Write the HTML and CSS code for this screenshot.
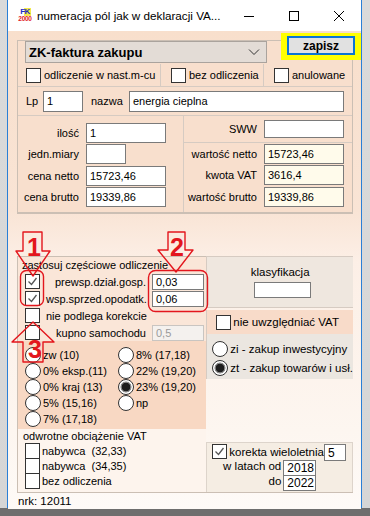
FILE: index.html
```html
<!DOCTYPE html>
<html lang="pl">
<head>
<meta charset="utf-8">
<title>numeracja pól</title>
<link rel="stylesheet" href="styles.css">
</head>
<body>
<div class="desk">
  <div class="win">
    <div class="titlebar">
      <div class="appicon"><span class="ic-fk">FK</span><span class="ic-yr">2000</span></div>
      <div class="title">numeracja pól jak w deklaracji VA...</div>
      <div class="caption">
        <span class="capbtn"><svg width="12" height="12" viewBox="0 0 12 12"><line x1="1" y1="6.5" x2="11" y2="6.5" stroke="#000" stroke-width="1"/></svg></span>
        <span class="capbtn"><svg width="12" height="12" viewBox="0 0 12 12"><rect x="1.5" y="1.5" width="9" height="9" fill="none" stroke="#000" stroke-width="1"/></svg></span>
        <span class="capbtn"><svg width="12" height="12" viewBox="0 0 12 12"><path d="M1 1 L11 11 M11 1 L1 11" stroke="#000" stroke-width="1"/></svg></span>
      </div>
    </div>
    <div class="client">
      <div class="save-wrap"><div class="save">zapisz</div></div>
      <div class="panel">
        <div class="row-combo">
          <div class="combo"><span>ZK-faktura zakupu</span><svg width="12" height="8" viewBox="0 0 12 8"><polyline points="1,1.5 6,6.5 11,1.5" fill="none" stroke="#333" stroke-width="1"/></svg></div>
        </div>
        <div class="row-flags">
          <div class="flag f1"><span class="chk"></span><span>odliczenie w nast.m-cu</span></div>
          <div class="flag f2"><span class="chk"></span><span>bez odliczenia</span></div>
          <div class="flag f3"><span class="chk"></span><span>anulowane</span></div>
        </div>
        <div class="row-lp">
          <span class="lbl-lp">Lp</span>
          <span class="inp inp-lp">1</span>
          <span class="lbl-nazwa">nazwa</span>
          <span class="inp inp-nazwa">energia cieplna</span>
        </div>
        <div class="row-fields">
          <div class="fields-left">
            <span class="flbl">ilość</span><span class="inp inp-f">1</span>
            <span class="flbl">jedn.miary</span><span class="inp inp-f inp-short"></span>
            <span class="flbl">cena netto</span><span class="inp inp-f">15723,46</span>
            <span class="flbl">cena brutto</span><span class="inp inp-f">19339,86</span>
          </div>
          <div class="fields-right">
            <div class="sww-row">
              <span class="flbl">SWW</span><span class="inp inp-sww"></span>
            </div>
            <div class="vals">
              <span class="flbl">wartość netto</span><span class="inp inp-f inp-val">15723,46</span>
              <span class="flbl">kwota VAT</span><span class="inp inp-f inp-val">3616,4</span>
              <span class="flbl">wartość brutto</span><span class="inp inp-f inp-val">19339,86</span>
            </div>
          </div>
        </div>
      </div>

      <div class="lower">
        <div class="lcol">
          <div class="partial">
            <div class="ptitle">zastosuj częściowe odliczenie</div>
            <div class="prow">
              <span class="chk"><svg width="13" height="13" viewBox="0 0 13 13"><polyline points="2.5,6.5 5.5,9.5 10.5,3" fill="none" stroke="#555" stroke-width="1.3"/></svg></span>
              <span class="plbl right">prewsp.dział.gosp.</span>
              <span class="inp inp-p">0,03</span>
            </div>
            <div class="prow">
              <span class="chk"><svg width="13" height="13" viewBox="0 0 13 13"><polyline points="2.5,6.5 5.5,9.5 10.5,3" fill="none" stroke="#555" stroke-width="1.3"/></svg></span>
              <span class="plbl right">wsp.sprzed.opodatk.</span>
              <span class="inp inp-p">0,06</span>
            </div>
            <div class="prow">
              <span class="chk"></span>
              <span class="plbl">nie podlega korekcie</span>
              <span></span>
            </div>
            <div class="prow">
              <span class="chk"></span>
              <span class="plbl right">kupno samochodu</span>
              <span class="inp inp-p inp-dis">0,5</span>
            </div>
          </div>
          <div class="rates">
            <div class="radio-item"><span class="rad"></span>zw (10)</div>
            <div class="radio-item"><span class="rad"></span>8% (17,18)</div>
            <div class="radio-item"><span class="rad"></span>0% eksp.(11)</div>
            <div class="radio-item"><span class="rad"></span>22% (19,20)</div>
            <div class="radio-item"><span class="rad"></span>0% kraj (13)</div>
            <div class="radio-item"><span class="rad on"></span>23% (19,20)</div>
            <div class="radio-item"><span class="rad"></span>5% (15,16)</div>
            <div class="radio-item"><span class="rad"></span>np</div>
            <div class="radio-item"><span class="rad"></span>7% (17,18)</div>
          </div>
          <div class="reverse">
            <div class="rtitle">odwrotne obciążenie VAT</div>
            <div class="rrow"><span class="chk"></span><span class="pre">nabywca  (32,33)</span></div>
            <div class="rrow"><span class="chk"></span><span class="pre">nabywca  (34,35)</span></div>
            <div class="rrow"><span class="chk"></span><span>bez odliczenia</span></div>
          </div>
        </div>
        <div class="rcol">
          <div class="klas">
            <div>klasyfikacja</div>
            <span class="inp inp-klas"></span>
          </div>
          <div class="nouw"><span class="chk"></span><span>nie uwzględniać VAT</span></div>
          <div class="zizt">
            <div class="radio-item"><span class="rad"></span>zi - zakup inwestycyjny</div>
            <div class="radio-item"><span class="rad on"></span>zt - zakup towarów i usł.</div>
          </div>
          <div class="rspacer"></div>
          <div class="korekta">
            <div class="krow1">
              <span class="chk"><svg width="13" height="13" viewBox="0 0 13 13"><polyline points="2.5,6.5 5.5,9.5 10.5,3" fill="none" stroke="#555" stroke-width="1.3"/></svg></span>
              <span class="klbl">korekta wieloletnia</span>
              <span class="inp inp-k5">5</span>
            </div>
            <div class="kgrid">
              <span class="flbl">w latach od</span><span class="inp inp-yr">2018</span>
              <span class="flbl">do</span><span class="inp inp-yr">2022</span>
            </div>
          </div>
        </div>
      </div>
      <div class="status">nrk: 12011</div>
    </div>
  </div>

  <svg class="marks" width="370" height="516" viewBox="0 0 370 516">
    <g fill="none" stroke="#e3161d" stroke-width="1.4" stroke-linejoin="round">
      <polygon points="23,232 42,232 42,251 50,251 33,276 16,251 23,251"/>
      <polygon points="168,232 185,232 185,250 193,250 176,272 158,250 168,250"/>
      <polygon points="33,322 54,342 43,342 43,362 23,362 23,342 12,342"/>
      <rect x="20.5" y="270.5" width="23" height="35" rx="6"/>
      <rect x="148.5" y="270.5" width="59" height="41" rx="7"/>
    </g>
    <g class="marknum">
      <text x="34" y="256">1</text>
      <text x="177" y="256">2</text>
      <text x="35" y="358">3</text>
    </g>
  </svg>
</div>
</body>
</html>
```

FILE: styles.css
```css
* { box-sizing: border-box; }
html, body { margin: 0; padding: 0; }
body {
  width: 370px;
  height: 516px;
  overflow: hidden;
  background: #6d6d6d;
  font-family: "Liberation Sans", Arial, sans-serif;
  font-size: 11px;
  color: #000;
}
.desk {
  position: relative;
  width: 370px;
  height: 516px;
  background: linear-gradient(#dadada 0, #d6d6d6 508px, #6e6e6e 508px);
}
.win {
  margin-left: 7px;
  width: 355px;
  height: 508px;
  border-left: 1px solid #2a7fd6;
  border-right: 1px solid #2a7fd6;
  background: #fff;
  display: flex;
  flex-direction: column;
}

/* title bar */
.titlebar {
  height: 31px;
  flex: none;
  display: flex;
  align-items: center;
  background: #fff;
}
.appicon {
  margin-left: 9px;
  width: 16px;
  height: 15px;
  display: flex;
  flex-direction: column;
  align-items: center;
  line-height: 1;
  font-weight: bold;
}
.ic-fk { font-size: 8px; color: #1d2bc4; background: linear-gradient(90deg, #fff 0 45%, #f6e84a 45%); padding: 0 1px; letter-spacing: -0.5px; }
.ic-yr { font-size: 6.5px; color: #e0191e; letter-spacing: -0.3px; }
.title {
  margin-left: 4px;
  font-size: 11.7px;
  color: #000;
  white-space: nowrap;
}
.caption {
  margin-left: auto;
  display: flex;
  height: 31px;
}
.capbtn {
  width: 45px;
  height: 31px;
  display: flex;
  align-items: center;
  justify-content: center;
}

/* client area */
.client {
  position: relative;
  flex: 1;
  padding: 9px 8px 0 9px;
  display: flex;
  flex-direction: column;
  background: linear-gradient(#f8dfcc 0, #f9e4d5 180px, #fcefe6 230px, #fdf6f0 400px, #fefaf7 477px);
}
.save-wrap {
  position: absolute;
  left: 273px;
  top: 2px;
  width: 80px;
  height: 27px;
  background: #ffff00;
  padding: 3px 6px 5px 6px;
}
.save {
  height: 19px;
  background: #e1e1e1;
  border: 2px solid #0b74d4;
  font-weight: bold;
  font-size: 12px;
  display: flex;
  align-items: center;
  justify-content: center;
}

.panel {
  flex: none;
  border: 1px solid #cbbfb4;
  background: #f8dfcd;
}
.row-combo {
  height: 23px;
  padding-left: 7px;
}
.combo {
  width: 242px;
  height: 22px;
  background: #e3dcd6;
  border: 1px solid #aaa39d;
  display: flex;
  align-items: center;
  justify-content: space-between;
  padding: 0 6px 0 3px;
  font-weight: bold;
  font-size: 13px;
}
.row-flags {
  height: 23px;
  display: flex;
  border-bottom: 1px solid #d6cbc2;
}
.flag {
  display: flex;
  align-items: center;
  border-right: 1px solid #d6cbc2;
  white-space: nowrap;
}
.flag .chk { margin-right: 3px; }
.f1 { width: 143px; flex: none; padding-left: 8px; }
.f2 { width: 103px; flex: none; padding-left: 10px; }
.f3 { flex: 1; padding-left: 10px; border-right: none; }

.chk {
  width: 15px;
  height: 15px;
  flex: none;
  background: #fff;
  border: 1px solid #333;
  display: inline-flex;
  align-items: center;
  justify-content: center;
}

.inp {
  background: #fff;
  border: 1px solid #7a7a7a;
  display: flex;
  align-items: center;
  padding-left: 3px;
  white-space: nowrap;
}

.row-lp {
  height: 29px;
  display: flex;
  align-items: center;
  padding-left: 8px;
  border-bottom: 1px solid #d6cbc2;
}
.lbl-lp { width: 17px; }
.inp-lp { width: 40px; height: 21px; }
.lbl-nazwa { width: 38px; margin-left: 8px; }
.inp-nazwa { width: 215px; height: 21px; }

.row-fields {
  height: 97px;
  display: flex;
  border-bottom: 1px solid #cbbfb4;
}
.fields-left {
  width: 166px;
  border-right: 1px solid #d6cbc2;
  padding-top: 7px;
  display: grid;
  grid-template-columns: 61px 80px;
  grid-auto-rows: 20px;
  column-gap: 7px;
  row-gap: 1.4px;
  align-content: start;
  align-items: center;
}
.flbl {
  text-align: right;
  white-space: nowrap;
}
.inp-f { width: 80px; height: 20px; }
.inp-short { width: 40px; }
.fields-right {
  flex: 1;
  display: flex;
  flex-direction: column;
}
.sww-row {
  height: 27px;
  border-bottom: 1px solid #d6cbc2;
  display: grid;
  grid-template-columns: 73px 80px;
  column-gap: 7px;
  align-items: center;
}
.inp-sww { width: 80px; height: 18px; }
.vals {
  padding-top: 1px;
  display: grid;
  grid-template-columns: 73px 80px;
  grid-auto-rows: 20px;
  column-gap: 7px;
  row-gap: 1.4px;
  align-items: center;
}
.inp-val { background: #fffbeb; }

/* lower area */
.lower {
  margin-top: 42px;
  height: 236px;
  flex: none;
  display: flex;
}
.lcol {
  width: 195px;
  display: flex;
  flex-direction: column;
  border-left: 1px solid #cbbfb4;
}
.partial {
  height: 85px;
  border-top: 1px solid #cbbfb4;
  background: #fae6d8;
}
.ptitle {
  height: 16px;
  line-height: 16px;
  padding-left: 4px;
}
.prow {
  height: 17px;
  display: grid;
  grid-template-columns: 15px 100px 52px;
  column-gap: 6px;
  padding-left: 7px;
  align-items: center;
}
.plbl { white-space: nowrap; }
.plbl.right { text-align: right; }
.inp-p { height: 16px; }
.inp-dis { background: #f4f1ee; border-color: #c9c5c1; color: #9a9a9a; }

.rates {
  height: 88px;
  background: #f8d8c3;
  padding: 6px 0 0 7px;
  display: grid;
  grid-template-columns: 93px 1fr;
  grid-auto-rows: 16px;
  align-content: start;
}
.radio-item {
  display: flex;
  align-items: center;
  white-space: nowrap;
}
.rad {
  width: 16px;
  height: 16px;
  flex: none;
  border-radius: 50%;
  border: 1px solid #333;
  background: #fff;
  margin-right: 2px;
}
.rad.on {
  background: radial-gradient(circle, #1e1e1e 0 4px, #8a8a8a 4.6px 5.2px, #fff 5.8px);
}

.reverse {
  flex: 1;
  background: #fdf4ed;
  padding-left: 7px;
}
.rtitle {
  height: 14px;
  line-height: 14px;
  margin-left: -2px;
}
.rrow {
  height: 15px;
  display: flex;
  align-items: flex-start;
}
.rrow .chk { height: 16px; margin-right: 2px; }
.rrow span:last-child { line-height: 16px; }
.pre { white-space: pre; }

.rcol {
  flex: 1;
  display: flex;
  flex-direction: column;
}
.klas {
  height: 52px;
  border-top: 1px solid #d6cbc2;
  border-left: 1px solid #d6cbc2;
  border-bottom: 1px solid #d6cbc2;
  background: #efe7df;
  padding-top: 9px;
  display: flex;
  flex-direction: column;
  align-items: center;
  font-size: 11.5px;
}
.klas > div { height: 15px; }
.inp-klas { width: 57px; height: 16px; margin-left: 4px; margin-top: 1px; }
.nouw {
  margin-top: 2px;
  height: 24px;
  background: #f8dbc9;
  border-left: 1px solid #d6cbc2;
  padding-left: 9px;
  display: flex;
  align-items: center;
  font-size: 11.5px;
}
.nouw .chk { margin-right: 2px; }
.zizt {
  height: 45px;
  background: #ebe6e0;
  border-left: 1px solid #d6cbc2;
  padding: 5px 0 0 5px;
  display: grid;
  grid-auto-rows: 19px;
  align-content: start;
  font-size: 11.5px;
}
.rspacer { flex: 1; }
.korekta {
  height: 50px;
  background: #f5ede3;
  border: 1px solid #ddd4cb;
  border-bottom: none;
  font-size: 11.5px;
}
.krow1 {
  height: 17px;
  display: flex;
  align-items: center;
  padding-left: 5px;
}
.klbl { margin-left: 2px; white-space: nowrap; }
.inp-k5 { width: 22px; height: 17px; margin-left: auto; margin-right: 6px; margin-top: 2px; font-size: 12px; }
.kgrid {
  display: grid;
  grid-template-columns: 74px 33px;
  column-gap: 2px;
  grid-auto-rows: 15px;
}
.inp-yr { width: 33px; height: 16px; font-size: 12px; }

.status {
  flex: none;
  height: 17px;
  border-top: 1px solid #cbbfb4;
  padding-left: 1px;
  line-height: 16px;
  font-size: 11.5px;
}

/* annotations */
.marks {
  position: absolute;
  left: 0;
  top: 0;
  pointer-events: none;
}
.marknum text {
  font-family: "Liberation Sans", Arial, sans-serif;
  font-weight: bold;
  font-size: 25px;
  fill: #e3161d;
  text-anchor: middle;
}
```
